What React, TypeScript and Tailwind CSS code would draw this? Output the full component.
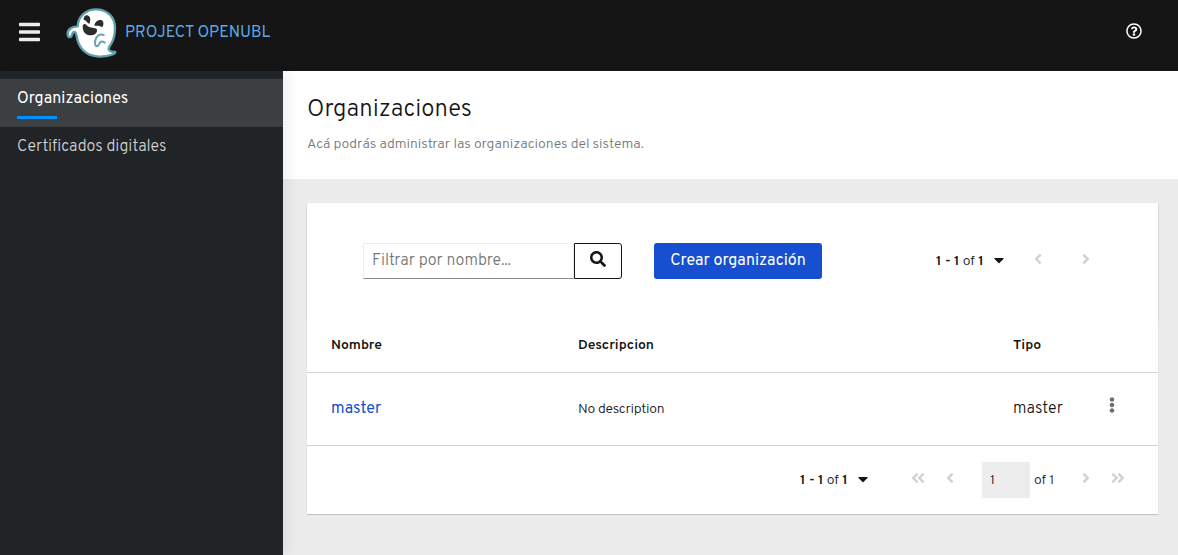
import React from "react";
import {
  FaAngleDoubleLeft,
  FaAngleDoubleRight,
  FaAngleLeft,
  FaAngleRight,
  FaBars,
  FaCaretDown,
  FaEllipsisV,
  FaRegQuestionCircle,
  FaSearch,
} from "react-icons/fa";

function GhostLogo() {
  return (
    <svg viewBox="0 0 192 186" className="h-[62px] w-[64px]" fill="none">
      <path
        d="M23 98C21 84 34 73 53 73C55 42 79 22 108 22C142 22 165 46 165 78C165 104 158 121 148 134C142 144 151 151 162 149C168 148 167 153 161 156C150 162 126 165 111 163C76 160 55 138 49 98C48 89 40 86 36 97C35 107 24 109 23 98Z"
        fill="#fff"
        stroke="#5fa0aa"
        strokeWidth="7"
        strokeLinejoin="round"
      />
      <path d="M71 53C70 43 78 37 85 41C92 44 92 54 89 64C84 68 83 57 71 53Z" fill="#2c2c2c" />
      <path d="M103 71C105 59 116 52 125 55C132 59 132 70 126 76C119 70 113 71 103 71Z" fill="#2c2c2c" />
      <path d="M68 74C68 65 76 64 80 70C88 79 99 76 109 80C115 86 108 99 94 100C78 101 68 90 68 74Z" fill="#2c2c2c" />
      <path
        d="M131 99C119 94 108 103 106 115C103 128 107 134 113 132C119 130 116 121 123 119C127 118 130 119 134 122"
        stroke="#67a5ae"
        strokeWidth="6"
        strokeLinecap="round"
      />
    </svg>
  );
}

function Header() {
  return (
    <header className="flex h-[71px] shrink-0 items-start bg-[#151515]">
      <button className="mt-[20px] ml-[18px] w-[22px] pl-[0.5px] text-[#ededed]" aria-label="Menu">
        <FaBars className="h-[24px] w-[21px]" />
      </button>
      <div className="mt-[2px] ml-[20px]">
        <GhostLogo />
      </div>
      <span className="mt-[21px] ml-px text-[16px] leading-[24px] text-[#5ba9e6]">PROJECT OPENUBL</span>
      <FaRegQuestionCircle className="mt-[23px] mr-[36px] ml-auto size-[16px] text-white" />
    </header>
  );
}

function Sidebar() {
  return (
    <nav className="z-10 w-[283px] shrink-0 bg-[#212427] pt-[8px] text-[16px] leading-[24px] shadow-[6px_0_12px_rgba(3,3,3,0.06)]">
      <div className="h-[48px] bg-[#3c3f42] pt-[8px] pl-[17px] text-white">
        <div>Organizaciones</div>
        <div className="mt-[5px] h-[3px] w-[40px] bg-[#0090ff]" />
      </div>
      <div className="pt-[8px] pl-[17px] font-light text-[#d2d2d2]">Certificados digitales</div>
    </nav>
  );
}

function Range() {
  return (
    <div className="flex w-[70px] shrink-0 items-center text-[14px] leading-[20px] font-light whitespace-nowrap">
      <span className="mt-[2px] w-[50px] pl-px">
        <b className="font-semibold">1 - 1</b> of <b className="font-semibold">1</b>
      </span>
      <FaCaretDown className="mt-[-2px] ml-[9px] h-[16px] w-[10px]" />
    </div>
  );
}

function Toolbar() {
  return (
    <div className="flex h-[117px] items-start pt-[40px] pl-[56px] shadow-[0_1px_2px_rgba(3,3,3,0.16)]">
      <input
        className="h-[36px] w-[211px] border border-[#ededed] border-b-[#8a8d90] pl-[8px] text-[16px] font-light placeholder:text-[#757575]"
        placeholder="Filtrar por nombre..."
      />
      <button className="flex h-[36px] w-[48px] justify-center rounded-r-[3px] border border-[#151515] pt-[7px]" aria-label="Buscar">
        <FaSearch className="size-[16px]" />
      </button>
      <button className="ml-[32px] h-[36px] w-[168px] rounded-[3px] bg-[#164fcf] text-[16px] text-white">
        Crear organización
      </button>
      <div className="ml-[113px] flex h-[36px] items-center">
        <Range />
      </div>
      <FaAngleLeft className="mt-[8px] ml-[25px] size-[16px] text-[#d2d2d2]" />
      <FaAngleRight className="mt-[8px] ml-[32px] size-[16px] text-[#d2d2d2]" />
    </div>
  );
}

function OrganizationsTable() {
  return (
    <div className="relative bg-white">
      <div className="grid h-[53px] grid-cols-[247px_435px_1fr] border-b border-[#d2d2d2] pt-[16px] pl-[24px] text-[14px] leading-[20px] font-semibold">
        <span>Nombre</span>
        <span>Descripcion</span>
        <span>Tipo</span>
      </div>
      <div className="grid h-[73px] grid-cols-[247px_435px_90px_1fr] border-b border-[#d2d2d2] pt-[24px] pl-[24px] text-[16px] leading-[24px] font-light">
        <a className="font-normal text-[#164fcf]">master</a>
        <span className="pt-px text-[14px] tracking-[-0.25px]">No description</span>
        <span>master</span>
        <FaEllipsisV className="ml-px size-[16px] text-[#6a6e73]" />
      </div>
    </div>
  );
}

function BottomPagination() {
  return (
    <div className="flex h-[68px] items-start pt-[16px] pl-[492px] text-[14px] font-light">
      <div className="flex h-[36px] items-center">
        <Range />
      </div>
      <FaAngleDoubleLeft className="mt-[8px] ml-[41px] size-[16px] text-[#d2d2d2]" />
      <FaAngleLeft className="mt-[8px] ml-[16px] size-[16px] text-[#d2d2d2]" />
      <div className="ml-[24px] h-[36px] w-[48px] bg-[#ededed] pt-px pl-[8px] leading-[36px]">1</div>
      <span className="ml-[4px] w-[44px] pt-px leading-[36px]">of 1</span>
      <FaAngleRight className="mt-[8px] size-[16px] text-[#d2d2d2]" />
      <FaAngleDoubleRight className="mt-[8px] ml-[16px] size-[16px] text-[#d2d2d2]" />
    </div>
  );
}

export default function App() {
  return (
    <div className="flex h-[555px] w-[1178px] flex-col overflow-hidden bg-[#ececec] font-['Overpass',Roboto,sans-serif] text-[#151515]">
      <Header />
      <div className="flex min-h-0 flex-1">
        <Sidebar />
        <main className="min-w-0 flex-1">
          <section className="h-[108px] bg-white pt-[23px] pl-[24px]">
            <h1 className="text-[24px] leading-[32px] font-light tracking-[-0.05px]">Organizaciones</h1>
            <p className="mt-[8px] text-[14px] leading-[21px] font-light tracking-[-0.03px] text-[#72767b]">
              Acá podrás administrar las organizaciones del sistema.
            </p>
          </section>
          <section className="mt-[24px] ml-[24px] w-[851px] bg-white shadow-[0_1px_1px_rgba(3,3,3,0.16)]">
            <Toolbar />
            <OrganizationsTable />
            <BottomPagination />
          </section>
        </main>
      </div>
    </div>
  );
}
